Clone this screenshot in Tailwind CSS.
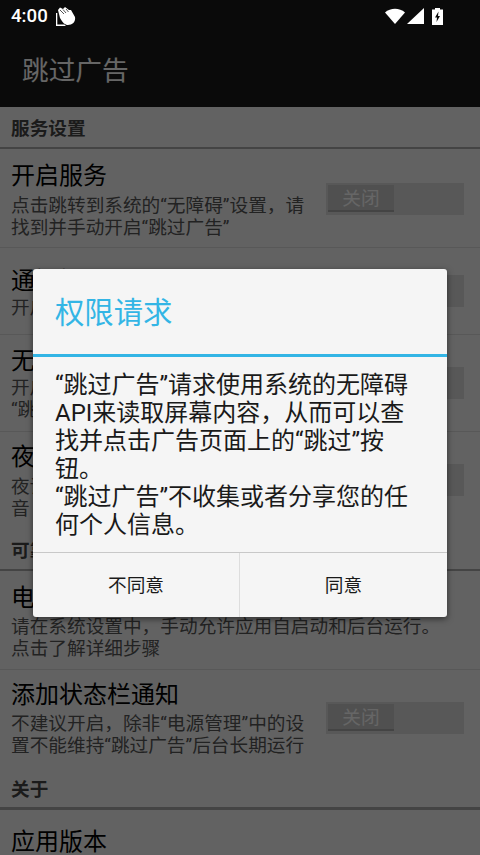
<!DOCTYPE html>
<html lang="zh-CN">
<head>
    <meta charset="UTF-8">
    <meta name="viewport" content="width=device-width, initial-scale=1.0">
    <title>跳过广告</title>
    <script src="https://cdn.jsdelivr.net/npm/@tailwindcss/browser@4"></script>
</head>
<body class="relative w-[480px] h-[855px] overflow-hidden bg-[#f5f5f5] font-['Roboto','Noto_Sans_CJK_SC',sans-serif]">
    <!-- app underneath the dialog -->
    <div class="h-[107px] bg-[#191919] pt-[32px]">
        <h1 class="pl-[22px] text-[26.67px] leading-[79px] text-white">跳过广告</h1>
    </div>

    <h2 class="h-[42px] pl-[11px] pt-[7px] border-b-2 border-[#aaaaaa] text-[18.67px] leading-[30px] font-bold text-[#444444]">服务设置</h2>

    <div class="flex h-[99px] pl-[11px] pr-[16px] border-b border-[#dddddd]">
        <div class="w-[300px] pt-[11px]">
            <p class="text-[24px] leading-[32px] text-black">开启服务</p>
            <p class="mt-[3px] text-[18.67px] leading-[22px] text-[#555555]">点击跳转到系统的“无障碍”设置，请找到并手动开启“跳过广告”</p>
        </div>
        <div class="ml-auto mt-[34px] flex h-[32px] w-[138px] bg-[#dddddd] p-[2px]">
            <span class="w-[66px] h-[27px] bg-[#c8c8c8] border-b-2 border-[#aaaaaa] text-center text-[18.67px] leading-[28px] text-white">关闭</span>
        </div>
    </div>

    <div class="flex h-[87px] pl-[11px] pr-[16px] border-b border-[#dddddd]">
        <div class="w-[300px] pt-[17px]">
            <p class="text-[24px] leading-[32px] text-black">通知提示</p>
            <p class="text-[18.67px] leading-[22px] text-[#555555]">开启后有提示</p>
        </div>
        <div class="ml-auto mt-[27px] flex h-[32px] w-[138px] bg-[#dddddd] p-[2px]">
            <span class="w-[66px] h-[27px] bg-[#c8c8c8] border-b-2 border-[#aaaaaa]"></span>
        </div>
    </div>

    <div class="flex h-[97px] pl-[11px] pr-[16px] border-b border-[#dddddd]">
        <div class="w-[300px] pt-[10px]">
            <p class="text-[24px] leading-[32px] text-black">无障碍</p>
            <p class="text-[18.67px] leading-[22px] text-[#555555]">开启后使用<br>“跳过广告”</p>
        </div>
        <div class="ml-auto mt-[32px] flex h-[32px] w-[138px] bg-[#dddddd] p-[2px]">
            <span class="w-[66px] h-[27px] bg-[#c8c8c8] border-b-2 border-[#aaaaaa]"></span>
        </div>
    </div>

    <div class="flex h-[96px] pl-[11px] pr-[16px]">
        <div class="w-[300px] pt-[9px]">
            <p class="text-[24px] leading-[32px] text-black">夜间</p>
            <p class="mt-[3px] text-[18.67px] leading-[22px] text-[#555555]">夜读模式<br>音</p>
        </div>
        <div class="ml-auto mt-[32px] flex h-[32px] w-[138px] bg-[#dddddd] p-[2px]">
            <span class="w-[66px] h-[27px] bg-[#c8c8c8] border-b-2 border-[#aaaaaa]"></span>
        </div>
    </div>

    <h2 class="h-[43px] pl-[11px] pt-[8px] border-b-2 border-[#aaaaaa] text-[18.67px] leading-[30px] font-bold text-[#444444]">可靠性设置</h2>

    <div class="h-[99px] pl-[11px] pr-[16px] pt-[11px] border-b border-[#dddddd]">
        <p class="text-[24px] leading-[32px] text-black">电源管理</p>
        <p class="mt-[2px] text-[18.67px] leading-[22px] text-[#555555] whitespace-nowrap">请在系统设置中，手动允许应用自启动和后台运行。<br>点击了解详细步骤</p>
    </div>

    <div class="flex h-[100px] pl-[11px] pr-[16px]">
        <div class="w-[300px] pt-[9px]">
            <p class="text-[24px] leading-[32px] text-black">添加状态栏通知</p>
            <p class="mt-[2px] text-[18.67px] leading-[22px] text-[#555555]">不建议开启，除非“电源管理”中的设置不能维持“跳过广告”后台长期运行</p>
        </div>
        <div class="ml-auto mt-[32px] flex h-[32px] w-[138px] bg-[#dddddd] p-[2px]">
            <span class="w-[66px] h-[27px] bg-[#c8c8c8] border-b-2 border-[#aaaaaa] text-center text-[18.67px] leading-[28px] text-white">关闭</span>
        </div>
    </div>

    <h2 class="h-[40px] pl-[11px] pt-[5px] border-b-[3px] border-[#aaaaaa] text-[18.67px] leading-[30px] font-bold text-[#444444]">关于</h2>

    <div class="pl-[11px] pt-[16px]">
        <p class="text-[24px] leading-[32px] text-black">应用版本</p>
    </div>

    <!-- scrim -->
    <div class="absolute inset-0 bg-black/60"></div>

    <!-- status bar sits above the scrim -->
    <div class="absolute top-0 left-0 w-[480px] h-[32px] flex items-center pl-[11px] pr-[37px] text-white">
        <span class="text-[18.67px] font-medium leading-[32px]">4:00</span>
        <svg class="ml-[7px]" width="21" height="21" viewBox="0 0 21 21" fill="#fff">
            <path d="M3 4 L5 1.500 L8 3 L10 1 L14 4 L16 4 L20 11 C21 16 17 19 13 19 C10 19 8 17 5 12 Z"/>
            <path d="M1 7 L1 20 L11 20 L9.500 18.600 L2.300 18.600 L2.300 7 Z"/>
            <path d="M5 4 L9 8 M8 3.500 L11 7 M11 3 L13.500 6" stroke="#0a0a0a" stroke-width="0.7" fill="none"/>
        </svg>
        <div class="ml-auto flex items-center">
            <svg width="20" height="16" viewBox="0 0 20 16" fill="#fff"><path d="M0 4.500 C5.500 -0.500 14.500 -0.500 20 4.500 L10 16 Z"/></svg>
            <svg class="ml-[2px]" width="17" height="16" viewBox="0 0 17 16" fill="#fff"><path d="M0 16 L17 0 L17 16 Z"/></svg>
            <svg class="ml-[8px]" width="11" height="17" viewBox="0 0 11 17" fill="#fff"><path d="M3 0 H8 V1.500 H11 V17 H0 V1.500 H3 Z"/><path d="M6.500 3.500 L3 9.500 H5 L4.500 14 L8 8 H6 Z" fill="#0a0a0a"/></svg>
        </div>
    </div>

    <!-- dialog -->
    <div class="absolute left-[33px] top-[269px] w-[414px] h-[348px] flex flex-col rounded-[3px] bg-[#f5f5f5] shadow-[0_2px_6px_rgba(0,0,0,0.5)]">
        <h3 class="h-[85px] pl-[22px] text-[29.33px] leading-[88px] text-[#33b5e5]">权限请求</h3>
        <div class="h-[3px] bg-[#33b5e5]"></div>
        <p class="h-[195px] pl-[22px] pr-[28px] pt-[14px] text-[24px] leading-[28px] text-[#1a1a1a]">“跳过广告”请求使用系统的无障碍API来读取屏幕内容，从而可以查找并点击广告页面上的“跳过”按钮。<br>“跳过广告”不收集或者分享您的任何个人信息。</p>
        <div class="flex flex-1 border-t border-[#c8c8c8] text-center text-[18.67px] text-[#1a1a1a]">
            <button class="w-[207px] pt-[2px] border-r border-[#dddddd]">不同意</button>
            <button class="flex-1 pt-[2px]">同意</button>
        </div>
    </div>
</body>
</html>
